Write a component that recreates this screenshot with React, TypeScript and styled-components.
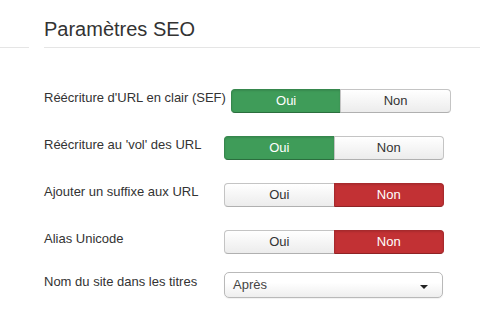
import React from 'react';
import styled, { createGlobalStyle } from 'styled-components';

const GlobalStyle = createGlobalStyle`
  html, body {
    margin: 0;
    padding: 0;
    background: #fff;
  }
  body {
    font-family: 'Liberation Sans', Arial, Helvetica, sans-serif;
    font-size: 13px;
    color: #333;
  }
`;

const Page = styled.div`
  display: flex;
  width: 480px;
  height: 314px;
  overflow: hidden;
`;

const Sidebar = styled.div`
  width: 29px;
  flex-shrink: 0;
  margin-right: 15px;
`;

const SidebarHead = styled.div`
  height: 47px;
  border-bottom: 1px solid #e5e5e5;
`;

const Main = styled.div`
  flex: 1;
  min-width: 0;
`;

const Legend = styled.h2`
  margin: 0 0 41px;
  padding: 17px 0 6px;
  font-size: 20px;
  line-height: 24px;
  font-weight: normal;
  color: #333;
  border-bottom: 1px solid #e5e5e5;
`;

const Row = styled.div<{ $gap: number }>`
  display: flex;
  align-items: flex-start;
  margin-bottom: ${({ $gap }) => $gap}px;
`;

const Label = styled.label`
  flex: 0 0 180px;
  line-height: 18px;
  white-space: nowrap;
  color: #333;
`;

const Toggle = styled.div<{ $offset: number }>`
  display: flex;
  width: 220px;
  margin-left: ${({ $offset }) => $offset}px;
`;

type Tone = 'success' | 'danger' | 'off';

const ToggleButton = styled.button<{ $tone: Tone; $side: 'left' | 'right' }>`
  flex: 1;
  height: 24px;
  padding: 2px 12px;
  font-family: inherit;
  font-size: 13px;
  line-height: 18px;
  text-align: center;
  cursor: pointer;
  border: 1px solid;
  border-radius: ${({ $side }) => ($side === 'left' ? '4px 0 0 4px' : '0 4px 4px 0')};
  ${({ $side }) => ($side === 'right' ? 'margin-left: -1px;' : '')}
  ${({ $tone }) =>
    $tone === 'success'
      ? `
    background: #3f9c59;
    border-color: #36874d #36874d #2b6e3e;
    color: #fff;
    box-shadow: inset 0 1px 2px rgba(0,0,0,0.12);
  `
      : $tone === 'danger'
        ? `
    background: #c23134;
    border-color: #a82a2d #a82a2d #8e2325;
    color: #fff;
    box-shadow: inset 0 1px 2px rgba(0,0,0,0.12);
  `
        : `
    background: linear-gradient(#fff, #ececec);
    border-color: #c4c4c4 #c4c4c4 #b0b0b0;
    color: #333;
  `}
`;

const Select = styled.div`
  position: relative;
  box-sizing: border-box;
  width: 219px;
  height: 26px;
  padding: 3px 8px 0 8px;
  border: 1px solid #b9b9b9;
  border-radius: 5px;
  background: linear-gradient(#fff 40%, #eee);
  box-shadow: 0 1px 1px rgba(0,0,0,0.06);
  color: #444;
  line-height: 18px;
  margin-top: -1px;
`;

const Caret = styled.span`
  position: absolute;
  right: 14px;
  top: 12px;
  width: 0;
  height: 0;
  border-left: 4px solid transparent;
  border-right: 4px solid transparent;
  border-top: 4px solid #222;
`;

type Switch = { label: string; yes: boolean; gap: number; offset: number };

const switches: Switch[] = [
  { label: "Réécriture d'URL en clair (SEF)", yes: true, gap: 23, offset: 5 },
  { label: "Réécriture au 'vol' des URL", yes: true, gap: 23, offset: 0 },
  { label: 'Ajouter un suffixe aux URL', yes: false, gap: 23, offset: 0 },
  { label: 'Alias Unicode', yes: false, gap: 19, offset: 0 },
];

export default function App() {
  return (
    <>
      <GlobalStyle />
      <Page>
        <Sidebar>
          <SidebarHead />
        </Sidebar>
        <Main>
          <Legend>Paramètres SEO</Legend>
          {switches.map((s) => (
            <Row key={s.label} $gap={s.gap}>
              <Label>{s.label}</Label>
              <Toggle $offset={s.offset}>
                <ToggleButton $side="left" $tone={s.yes ? 'success' : 'off'}>
                  Oui
                </ToggleButton>
                <ToggleButton $side="right" $tone={s.yes ? 'off' : 'danger'}>
                  Non
                </ToggleButton>
              </Toggle>
            </Row>
          ))}
          <Row $gap={0}>
            <Label>Nom du site dans les titres</Label>
            <Select>
              Après
              <Caret />
            </Select>
          </Row>
        </Main>
      </Page>
    </>
  );
}
